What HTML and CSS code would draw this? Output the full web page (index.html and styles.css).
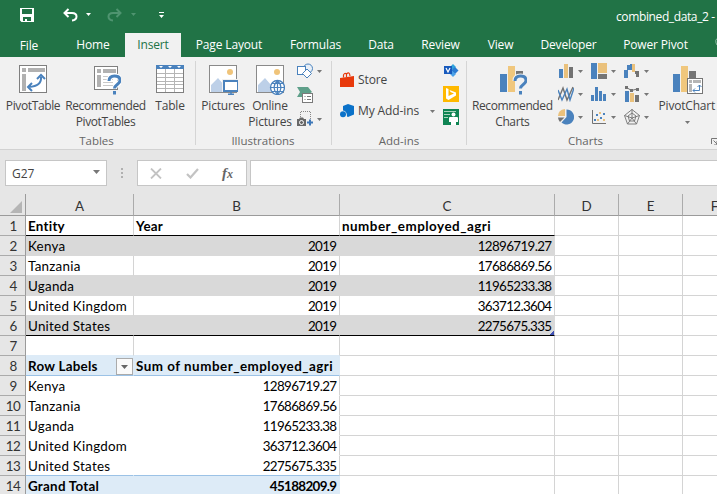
FILE: index.html
```html
<!DOCTYPE html>
<html lang="en">
<head>
<meta charset="utf-8">
<title>combined_data_2 - Excel</title>
<link rel="stylesheet" href="styles.css">
</head>
<body>
<svg class="defs" width="0" height="0">
  <defs>
    <symbol id="arrow" viewBox="0 0 5 3"><path d="M0 0h5L2.500 3z" fill="currentColor"/></symbol>
    <symbol id="photo" viewBox="0 0 30 30">
      <rect x="1.500" y=".5" width="27" height="27" fill="#fff" stroke="#8a8a8a"/>
      <circle cx="22" cy="7" r="3" fill="#f0c47a"/>
      <path d="M3 27V20l7-7 6 7 3-3 4 4v6z" fill="#bdd0e8"/>
    </symbol>
  </defs>
</svg>
<div class="window">
  <header class="titlebar">
    <svg class="save" width="14" height="14" viewBox="0 0 14 14"><path fill="#fff" fill-rule="evenodd" d="M0 0h14v14H1.500L0 12.500zM2 1v5h10V1zM3 9v4h2v-2h2v2h4V9z"/></svg>
    <svg class="undo" width="15" height="14" viewBox="0 0 15 14"><path d="M5.500 1 1.500 5l4 4M2 5h7c6 0 6 7 0 7.500" fill="none" stroke="#fff" stroke-width="2"/></svg>
    <svg class="undo-arrow" width="5" height="3"><use href="#arrow"/></svg>
    <svg class="redo" width="15" height="14" viewBox="0 0 15 14"><path d="M9.500 1l4 4-4 4M13 5H6C0 5 0 12 6 12.500" fill="none" stroke="#4f9470" stroke-width="2"/></svg>
    <svg class="redo-arrow" width="5" height="3"><use href="#arrow"/></svg>
    <svg class="customize" width="5" height="6" viewBox="0 0 5 6"><path d="M0 0h5v1H0zM0 3h5L2.500 6z" fill="#fff"/></svg>
    <span class="doc">combined_data_2 -</span>
  </header>
  <nav class="tabs">
    <span class="tab file">File</span><span class="tab home">Home</span><span class="tab active">Insert</span><span class="tab layout">Page Layout</span><span class="tab formulas">Formulas</span><span class="tab data">Data</span><span class="tab review">Review</span><span class="tab view">View</span><span class="tab developer">Developer</span><span class="tab power">Power Pivot</span>
    <svg class="bulb" width="2" height="8" viewBox="0 0 2 8"><path d="M2 .5Q0 2 1 5l1 2" fill="none" stroke="#8dbba1"/></svg>
  </nav>
  <section class="ribbon">
    <div class="group tables">
      <div class="body">
        <div class="big pivot">
          <svg width="30" height="30" viewBox="0 0 30 30"><rect x="1.500" y=".5" width="27" height="27" fill="#fff" stroke="#7f7f7f"/><path d="M4 3h4v4H4zM10 3h17v4H10zM4 9h4v17H4z" fill="#b1b1b1"/><path d="M23 12q1 9-12 10M19 14l4-4 4 4M14 18l-4 4 4 4" fill="none" stroke="#4a82bd" stroke-width="2"/></svg>
          <span>PivotTable</span>
        </div>
        <div class="big recommended">
          <svg width="30" height="30" viewBox="0 0 30 30"><rect x="3.500" y="1.500" width="23" height="23" fill="#fff" stroke="#7f7f7f"/><path d="M6 4h4v4H6zM12 4h13v4H12zM6 10h4v12H6z" fill="#b1b1b1"/><path d="M12 11.500h10M12 14.500h10M12 17.500h10M12 20.500h10" stroke="#c9c9c9"/><path d="M18 16q0-5 5.500-5t5.500 4.500c0 4-5.500 4-5.500 8" fill="none" stroke="#fff" stroke-width="5"/><path d="M18 16q0-5 5.500-5t5.500 4.500c0 4-5.500 4-5.500 8M23.500 26v3.500" fill="none" stroke="#4a82bd" stroke-width="3"/></svg>
          <span>Recommended<br>PivotTables</span>
        </div>
        <div class="big table">
          <svg width="30" height="30" viewBox="0 0 30 30"><rect x="1.500" y=".5" width="27" height="27" fill="#fff" stroke="#7f7f7f"/><path d="M1 0h28v4H1z" fill="#4a82bd"/><path d="M4 1h4L6 3zM13 1h4l-2 2zM22 1h4l-2 2z" fill="#fff"/><path d="M10.500 4v23M19.500 4v23M2 8.500h26M2 12.500h26M2 16.500h26M2 19.500h26M2 23.500h26" stroke="#b5b5b5"/></svg>
          <span>Table</span>
        </div>
      </div>
      <div class="caption">Tables</div>
    </div>
    <div class="group illustrations">
      <div class="body">
        <div class="big pictures">
          <svg width="30" height="30" viewBox="0 0 30 30"><use href="#photo" width="30" height="30"/><path d="M14 14h16v13H14z" fill="#f1f1f1"/><rect x="16" y="16" width="14" height="10" fill="#fff" stroke="#4a82bd" stroke-width="2"/><path d="M23 26v3M20 29.300h6" stroke="#4a82bd" stroke-width="1.500"/></svg>
          <span>Pictures</span>
        </div>
        <div class="big online">
          <svg width="30" height="30" viewBox="0 0 30 30"><use href="#photo" width="30" height="30"/><circle cx="22.500" cy="22.500" r="7" fill="#fff" stroke="#4a82bd" stroke-width="1.300"/><path d="M22.500 15.500v14M15.500 22.500h14M17 18.500h11M17 26.500h11M22.500 15.500q-7 7 0 14q7-7 0-14" fill="none" stroke="#4a82bd" stroke-width="1.200"/></svg>
          <span>Online<br>Pictures</span>
        </div>
        <div class="smalls">
          <div class="small"><svg width="16" height="16" viewBox="0 0 16 16"><circle cx="11" cy="5.500" r="4.500" fill="#e8eff7" stroke="#4a82bd"/><rect x=".5" y="3.500" width="8" height="8" fill="#fff" stroke="#4a82bd"/><path d="m10 6 4.500 4.500L10 15l-4.500-4.500z" fill="#fff" stroke="#4a82bd"/></svg><svg class="drop" width="5" height="3"><use href="#arrow"/></svg></div>
          <div class="small"><svg width="16" height="16" viewBox="0 0 16 16"><path d="M0 0h11l4 5-3 2H6v3H0l3-5z" fill="#5fa08a"/><rect x="5.500" y="6.500" width="10" height="9" fill="#fff" stroke="#7a7a7a"/><path d="M7.500 9.500h1M10 9.500h4M7.500 12.500h1M10 12.500h4" stroke="#7a7a7a"/></svg></div>
          <div class="small"><svg width="16" height="16" viewBox="0 0 16 16"><path d="M3.500 6V.5h10V8" fill="none" stroke="#888" stroke-dasharray="1 1"/><path d="M0 8h2l1-1.500h3L7 8h2v7H0z" fill="#686868"/><circle cx="4.500" cy="11.500" r="2" fill="#686868" stroke="#fff"/><path d="M10 11.500h6M13 8.500v6" stroke="#3f78b8" stroke-width="2"/></svg><svg class="drop" width="5" height="3"><use href="#arrow"/></svg></div>
        </div>
      </div>
      <div class="caption">Illustrations</div>
    </div>
    <div class="group addins">
      <div class="body">
        <div class="links">
          <div class="link"><svg width="14" height="16" viewBox="0 0 14 16"><path d="M0 6l14-2v11L0 15z" fill="#e8390b"/><path d="M3.500 5.500V3q1-2.500 3-1v3M6.500 2q3-3 3.500 2" fill="none" stroke="#e8390b" stroke-width="1.200"/></svg><span>Store</span></div>
          <div class="link my"><svg width="14" height="14" viewBox="0 0 14 14"><path d="m8 0 6 2v8.500L8 13l-1-.5Q7 7 3 6.500V2z" fill="#0b72c9"/><circle cx="3" cy="10.300" r="3" fill="#0b72c9"/></svg><span>My Add-ins</span><svg class="drop" width="5" height="3"><use href="#arrow"/></svg></div>
        </div>
        <div class="apps">
          <svg width="16" height="16" viewBox="0 0 16 16"><path d="m10 1 3 3-3 3-3-3z" fill="#31a4dc"/><path d="m12 4 3.500 3.500L12 11 8 7.500z" fill="#2b7cd3"/><path d="m9 8 4 3-3 3-3-3z" fill="#4aa1e8"/><path d="M1 3h8v8H1z" fill="#185abd"/><path d="m3 5 2 4 2-4" fill="none" stroke="#fff" stroke-width="1.200"/></svg>
          <svg width="16" height="16" viewBox="0 0 16 16"><path d="M0 0h16v16H0z" fill="#ffb900"/><path fill="#fff" d="m3 2 2.500 1v7L11 7.500 7.500 6 6.500 4 13 6.500v3L5.500 14 3 12.500z"/></svg>
          <svg width="16" height="16" viewBox="0 0 16 16"><path d="M0 0h16v16H0z" fill="#0f8453"/><path d="M1 2.500h12M1 5.500h6M1 8.500h4" stroke="#a9d3bd" stroke-width="1.200"/><circle cx="10.500" cy="5.500" r="2" fill="#fff"/><path d="M6 9q0-1 1-1h7q1 0 1 1v4h-2v3H8v-3H6z" fill="#fff"/></svg>
        </div>
      </div>
      <div class="caption">Add-ins</div>
    </div>
    <div class="group charts">
      <div class="body">
        <div class="big rec-charts">
          <svg width="30" height="30" viewBox="0 0 30 30"><path d="M3 9h7v18H3z" fill="#4a82bd"/><path d="M11 1h7v26h-7z" fill="#f0c77d"/><path d="M19 6h7v4h-7z" fill="#757575"/><path d="M18 16q0-5 5.500-5t5.500 4.500c0 4-5.500 4-5.500 8v6" fill="none" stroke="#f1f1f1" stroke-width="5"/><path d="M18 16q0-5 5.500-5t5.500 4.500c0 4-5.500 4-5.500 8M23.500 26v3.500" fill="none" stroke="#4a82bd" stroke-width="3"/></svg>
          <span>Recommended<br>Charts</span>
        </div>
        <div class="gallery">
          <div class="small"><svg width="16" height="16" viewBox="0 0 16 16"><path d="M1 6h4v9H1z" fill="#4a82bd"/><path d="M6 1h4v14H6z" fill="#eac17c"/><path d="M11 4h4v11h-4z" fill="#727272"/></svg><svg class="drop" width="5" height="3"><use href="#arrow"/></svg></div>
          <div class="small"><svg width="16" height="16" viewBox="0 0 16 16"><path d="M0 0h6v16H0z" fill="#4a82bd"/><path d="M7 0h9v10H7z" fill="#eac17c"/><path d="M7 11h9v5H7z" fill="#757575"/></svg><svg class="drop" width="5" height="3"><use href="#arrow"/></svg></div>
          <div class="small"><svg width="16" height="16" viewBox="0 0 16 16"><path d="M0 7h4v8H0zM3 2h4v5H3zM6 1h2v6H6z" fill="#4a82bd"/><path d="M8 1h3v8H8z" fill="#eac17c"/><path d="M11 8h4v6h-3v-3h-1z" fill="#727272"/></svg><svg class="drop" width="5" height="3"><use href="#arrow"/></svg></div>
          <div class="small"><svg width="16" height="16" viewBox="0 0 16 16"><path d="m0 14 5-12 4 12 6-13" fill="none" stroke="#727272" stroke-width="1.400"/><path d="m0 4 4 10L9 3l3 11 4-12" fill="none" stroke="#4a82bd" stroke-width="1.400"/></svg><svg class="drop" width="5" height="3"><use href="#arrow"/></svg></div>
          <div class="small"><svg width="16" height="16" viewBox="0 0 16 16"><path d="M0 9h3v6H0zM4 1h3v14H4zM8 5h3v10H8zM12 8h3v7h-3z" fill="#4a82bd"/></svg><svg class="drop" width="5" height="3"><use href="#arrow"/></svg></div>
          <div class="small"><svg width="16" height="16" viewBox="0 0 16 16"><path d="M1 5h4v11H1z" fill="#4a82bd"/><path d="M6 7h4v9H6z" fill="#eac17c"/><path d="M11 9h4v7h-4z" fill="#727272"/><path d="m2.500 1.500 5 3L13 3" fill="none" stroke="#727272"/><path d="M1 0h3v3H1zM6 3h3v3H6zM12 2h3v3h-3z" fill="#727272"/></svg><svg class="drop" width="5" height="3"><use href="#arrow"/></svg></div>
          <div class="small"><svg width="16" height="16" viewBox="0 0 16 16"><path d="M8.500 8V.5a7.500 7.500 0 1 1-5 13z" fill="#4a82bd"/><path d="M7 7H0q0-6 7-7z" fill="#eac17c"/><path d="M0 8.500h6.500L2 13Q.3 11 0 8.500" fill="#727272"/></svg><svg class="drop" width="5" height="3"><use href="#arrow"/></svg></div>
          <div class="small"><svg width="16" height="16" viewBox="0 0 16 16"><path d="M1.500 1v13.500H15" fill="none" stroke="#727272"/><path d="M3 10h2v2H3zM5 5h2v2H5zM9 8h2v2H9zM12 4h2v2h-2z" fill="#4a82bd"/><path d="M8 3h2v2H8zM6 10h2v2H6zM12 10h2v2h-2z" fill="#eac17c"/></svg><svg class="drop" width="5" height="3"><use href="#arrow"/></svg></div>
          <div class="small"><svg width="16" height="16" viewBox="0 0 16 16"><path d="m8 .5 7.500 6-3 8.500h-9L.5 6.500zM8 4l4 3-1.500 5h-5L4 7zM8 0v9l7.500-2.500M8 9l4.500 6M8 9l-4.500 6M8 9 .5 6.500" fill="none" stroke="#727272" stroke-width=".9"/></svg><svg class="drop" width="5" height="3"><use href="#arrow"/></svg></div>
        </div>
        <div class="big pivot-chart">
          <svg width="30" height="30" viewBox="0 0 30 30"><path d="M0 9h7v18H0z" fill="#4a82bd"/><path d="M8 1h7v26H8z" fill="#f0c77d"/><path d="M16 6h7v8h-7z" fill="#757575"/><rect x="14.500" y="13.500" width="15" height="15" fill="#fff" stroke="#757575"/><path d="M16 15h3v3h-3zM20 15h8v3h-8zM16 19h3v8h-3z" fill="#b5b5b5"/><path d="M20 25.500h6.500V20M24.500 22l2-2 2 2M22 23.500l-2 2 2 2" fill="none" stroke="#4a82bd"/></svg>
          <span>PivotChart</span>
          <svg class="drop" width="5" height="3"><use href="#arrow"/></svg>
        </div>
      </div>
      <div class="foot"><div class="caption">Charts</div><svg width="6" height="7" viewBox="0 0 6 7"><path d="M.5 6V.5H6M2.500 2.500 6 6M6 3v4H3" fill="none" stroke="#777"/></svg></div>
    </div>
  </section>
  <section class="formula-bar">
    <div class="name-box"><span>G27</span><svg width="7" height="4" viewBox="0 0 7 4"><path d="M0 0h7L3.500 4z" fill="#777"/></svg></div>
    <svg class="grip" width="2" height="11" viewBox="0 0 2 11"><path d="M0 0h2v2H0zM0 4h2v2H0zM0 8h2v2H0z" fill="#b0b0b0"/></svg>
    <div class="actions">
      <svg width="12" height="11" viewBox="0 0 12 11"><path d="m1 .5 10 10m0-10-10 10" stroke="#c3c3c3" stroke-width="1.800"/></svg>
      <svg width="13" height="11" viewBox="0 0 13 11"><path d="m1 6 3.500 3.500L12 1" fill="none" stroke="#c3c3c3" stroke-width="2.200"/></svg>
      <span class="fx">f<small>x</small></span>
    </div>
    <div class="input"></div>
  </section>
  <main class="sheet">
    <div class="row heads"><div class="corner"><svg width="12" height="12" viewBox="0 0 12 12"><path d="M12 0v12H0z" fill="#b5b5b5"/></svg></div><div>A</div><div>B</div><div>C</div><div>D</div><div>E</div><div>F</div></div>
    <div class="row list-head"><div class="num">1</div><div>Entity</div><div>Year</div><div class="field">number_employed_agri</div><div></div><div></div><div></div></div>
    <div class="row band"><div class="num">2</div><div>Kenya</div><div class="n">2019</div><div class="n">12896719.27</div><div></div><div></div><div></div></div>
    <div class="row plain"><div class="num">3</div><div>Tanzania</div><div class="n">2019</div><div class="n">17686869.56</div><div></div><div></div><div></div></div>
    <div class="row band"><div class="num">4</div><div>Uganda</div><div class="n">2019</div><div class="n">11965233.38</div><div></div><div></div><div></div></div>
    <div class="row plain"><div class="num">5</div><div>United Kingdom</div><div class="n">2019</div><div class="n">363712.3604</div><div></div><div></div><div></div></div>
    <div class="row band last"><div class="num">6</div><div>United States</div><div class="n">2019</div><div class="n corner-mark">2275675.335</div><div></div><div></div><div></div></div>
    <div class="row before-pivot"><div class="num">7</div><div></div><div></div><div></div><div></div><div></div><div></div></div>
    <div class="row pivot-head"><div class="num">8</div><div class="filter-cell">Row Labels<span class="filter"><svg width="7" height="4" viewBox="0 0 7 4"><path d="M0 0h7L3.500 4z" fill="#666"/></svg></span></div><div class="field">Sum of number_employed_agri</div><div></div><div></div><div></div><div></div></div>
    <div class="row pivot-row"><div class="num">9</div><div>Kenya</div><div class="n">12896719.27</div><div></div><div></div><div></div><div></div></div>
    <div class="row pivot-row"><div class="num">10</div><div>Tanzania</div><div class="n">17686869.56</div><div></div><div></div><div></div><div></div></div>
    <div class="row pivot-row"><div class="num">11</div><div>Uganda</div><div class="n">11965233.38</div><div></div><div></div><div></div><div></div></div>
    <div class="row pivot-row"><div class="num">12</div><div>United Kingdom</div><div class="n">363712.3604</div><div></div><div></div><div></div><div></div></div>
    <div class="row pivot-row pivot-end"><div class="num">13</div><div>United States</div><div class="n">2275675.335</div><div></div><div></div><div></div><div></div></div>
    <div class="row total"><div class="num">14</div><div>Grand Total</div><div class="n">45188209.9</div><div></div><div></div><div></div><div></div></div>
  </main>
</div>
</body>
</html>
```
FILE: styles.css
```css
* { box-sizing: border-box; }
body { margin: 0; font: 12px "Open Sans", "Noto Sans", sans-serif; color: #444; }
svg { display: block; flex: none; }
.defs { position: absolute; }
.window { width: 717px; height: 494px; overflow: hidden; background: #e6e6e6; }

.titlebar { height: 33px; background: #217346; color: #fff; display: flex; align-items: center; padding-left: 20px; white-space: nowrap; }
.save { margin-top: -3px; }
.undo { margin-left: 29px; margin-top: -3px; }
.undo-arrow { margin-left: 8px; margin-top: -4px; }
.redo { margin-left: 16px; margin-top: -3px; }
.redo-arrow { margin-left: 9px; margin-top: -4px; color: #4f9470; }
.customize { margin-left: 23px; margin-top: -4px; }
.doc { margin-left: 452px; letter-spacing: -.38px; }

.tabs { height: 24px; background: #217346; color: #fff; display: flex; line-height: 23px; white-space: nowrap; overflow: hidden; }
.tab { flex: none; text-align: center; letter-spacing: -.15px; }
.file { width: 58px; line-height: 25px; }
.home { width: 67px; padding-left: 3px; }
.active { width: 56px; background: #f1f1f1; color: #217346; }
.layout { width: 96px; }
.formulas { width: 77px; }
.data { width: 54px; }
.review { width: 65px; }
.view { width: 55px; }
.developer { width: 81px; }
.power { width: 93px; }
.bulb { margin: 5px 0 0 13px; }

.ribbon { height: 93px; background: #f1f1f1; border-bottom: 1px solid #d2d2d2; display: flex; padding-top: 4px; }
.group { height: 84px; border-right: 1px solid #d5d5d5; display: flex; flex-direction: column; flex: none; }
.body { height: 71px; display: flex; flex: none; }
.caption { text-align: center; line-height: 17px; color: #666; font-size: 11.500px; }
.tables { width: 196px; padding-left: 2px; }
.tables .caption { padding-right: 4px; }
.illustrations { width: 136px; padding-left: 3px; }
.illustrations .caption { padding-right: 4px; }
.addins { width: 135px; }
.charts { width: 250px; border-right: 0; padding-left: 3px; }
.big { display: flex; flex-direction: column; align-items: center; padding-top: 4px; line-height: 16px; text-align: center; white-space: nowrap; letter-spacing: -.38px; }
.big > span { margin-top: 3px; }
.pivot { width: 62px; }
.recommended { width: 83px; }
.table { width: 46px; letter-spacing: -.2px; }
.pictures { width: 48px; letter-spacing: -.2px; }
.online { width: 46px; letter-spacing: -.2px; }
.rec-charts { width: 86px; }
.rec-charts > span { padding-left: 1px; }
.pivot-chart { width: 60px; margin-left: 2px; letter-spacing: -.2px; }
.pivot-chart > span { margin-left: -2px; }
.pivot-chart .drop { margin-top: 7px; }
.drop { color: #777; }
.smalls { padding: 2px 0 0 4px; display: flex; flex-direction: column; gap: 8px; }
.small { display: flex; align-items: center; gap: 4px; height: 16px; }
.links { width: 111px; padding: 9px 0 0 8px; }
.link { display: flex; align-items: center; height: 20px; line-height: 20px; white-space: nowrap; letter-spacing: -.1px; }
.link span { margin-left: 4px; }
.my { margin-top: 11px; }
.my .drop { margin-left: auto; margin-right: 8px; }
.apps { display: flex; flex-direction: column; gap: 7px; padding-top: 2px; }
.gallery { display: grid; grid-template-columns: repeat(3, 33px); grid-template-rows: repeat(3, 16px); row-gap: 7px; padding: 2px 0 0 4px; }
.foot { display: flex; }
.foot .caption { width: 231px; }
.foot svg { margin: 6px 0 0 10px; }

.formula-bar { height: 44px; padding: 10px 0 8px 5px; display: flex; align-items: center; }
.name-box { width: 102px; height: 26px; background: #fff; border: 1px solid #c6c6c6; display: flex; align-items: center; justify-content: space-between; padding: 0 6px; }
.name-box svg { margin-top: -2px; }
.grip { margin-left: 14px; }
.actions { width: 110px; height: 26px; margin-left: 14px; background: #fff; border: 1px solid #c6c6c6; display: flex; align-items: center; padding-left: 12px; }
.actions svg + svg { margin-left: 24px; }
.fx { margin-left: 23px; font: italic bold 15px "Liberation Serif", serif; color: #666; }
.fx small { font-size: 12px; }
.input { flex: 1; height: 26px; margin-left: 3px; background: #fff; border: 1px solid #c6c6c6; border-right: 0; }

.sheet { font: 13.400px Lato, sans-serif; color: #000; letter-spacing: .25px; }
.row { display: grid; grid-template-columns: 26px 108px 206px 215px 64px 64px 64px; grid-auto-rows: 20px; }
.row > div { background: #fff; border-right: 1px solid #d4d4d4; border-bottom: 1px solid #d4d4d4; padding: 0 2px; line-height: 21px; white-space: nowrap; }
.row > .num { background: #e6e6e6; border-right-color: #9b9b9b; border-bottom-color: #ababab; color: #333; text-align: center; padding: 0 0 0 1px; letter-spacing: -.6px; }
.row > .n { text-align: right; letter-spacing: -.65px; padding-right: 2.600px; }
.row > .field { letter-spacing: .5px; }
.row.heads { grid-auto-rows: 22px; }
.row.heads > div { background: #e6e6e6; line-height: 25px; border-right-color: #ababab; border-bottom-color: #9b9b9b; text-align: center; color: #333; letter-spacing: 0; }
.row.heads > .corner { padding: 7px 0 0 10px; border-right-color: #9b9b9b; }
.list-head > div:nth-child(n+2):nth-child(-n+4) { font-weight: bold; border-bottom-color: #000; }
.band > div:nth-child(n+2):nth-child(-n+4) { background: #d9d9d9; border-color: #d9d9d9; }
.plain > div:nth-child(n+2):nth-child(-n+4) { border-bottom-color: #d9d9d9; }
.last > div:nth-child(n+2):nth-child(-n+4) { border-bottom-color: #000; }
.corner-mark { position: relative; }
.corner-mark::after { content: ""; position: absolute; right: 0; bottom: 0; width: 4px; height: 4px; background: linear-gradient(135deg, transparent 40%, #3f51b5 40%); }
.before-pivot > div:nth-child(2), .before-pivot > div:nth-child(3) { border-bottom-color: #ddebf7; }
.pivot-head > div:nth-child(2), .pivot-head > div:nth-child(3) { background: #ddebf7; border-right-color: #ddebf7; border-bottom-color: #9bc2e6; font-weight: bold; }
.row > .filter-cell { display: flex; justify-content: space-between; padding-right: 0; }
.filter { width: 17px; height: 17px; margin-top: 2px; background: #fafafa; border: 1px solid #ababab; display: flex; align-items: center; justify-content: center; }
.pivot-row > div:nth-child(2) { border-color: #fff; }
.pivot-row > div:nth-child(3) { border-bottom-color: #fff; }
.row.pivot-end > div:nth-child(2), .row.pivot-end > div:nth-child(3) { border-bottom-color: #9bc2e6; }
.total > div:nth-child(2), .total > div:nth-child(3) { background: #ddebf7; border-color: #ddebf7; font-weight: bold; }
```
